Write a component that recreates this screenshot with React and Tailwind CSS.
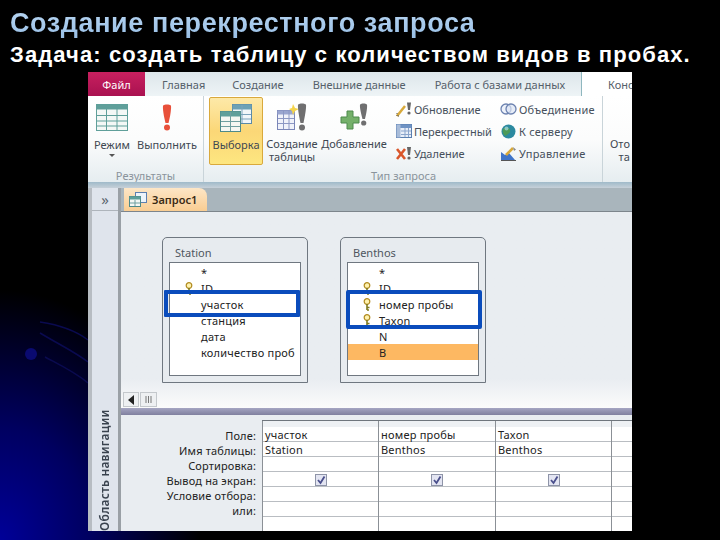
const ui = { fontFamily: '"Noto Sans", "Liberation Sans", sans-serif' };

function GridIcon({ w = 32, h = 27, head = "#5f9f9a", line = "#5f9f9a", fill = "#f4f8f6" }) {
  return (
    <svg width={w} height={h} viewBox="0 0 32 27" className="shrink-0">
      <rect x="0.5" y="0.5" width="31" height="26" fill={fill} stroke={line} />
      <rect x="0.5" y="0.5" width="31" height="5" fill={head} />
      <path d="M1 11.5H31M1 17H31M1 22H31M10.5 1V26M21 1V26" stroke={line} strokeWidth="1" fill="none" />
    </svg>
  );
}

function Bang({ color = "#e8503a", h = 27, w = 12 }) {
  return (
    <svg width={w} height={h} viewBox="0 0 12 27" className="shrink-0">
      <path d="M2 1.5C3.5 0 8.5 0 10 1.5C10.5 6 8.5 15 7.5 19H4.5C3.5 15 1.5 6 2 1.5Z" fill={color} />
      <circle cx="6" cy="23.5" r="3" fill={color} />
    </svg>
  );
}

function SelectIcon() {
  return (
    <svg width="32" height="28" viewBox="0 0 32 28" className="shrink-0">
      <rect x="12.5" y="0.5" width="19" height="19" fill="#f1f6fa" stroke="#5b8aa8" />
      <rect x="12.5" y="0.5" width="19" height="5" fill="#6ca1b5" />
      <path d="M13 10.5H31M13 15H31M22 1V19" stroke="#7ba3bd" fill="none" />
      <rect x="0.5" y="7.5" width="20" height="20" fill="#f5f7f2" stroke="#4e8a8a" />
      <rect x="0.5" y="7.5" width="20" height="5" fill="#5f9f9a" />
      <path d="M1 17.5H20M1 22.5H20M10.5 8V27" stroke="#6f9fa0" fill="none" />
    </svg>
  );
}

function MakeTableIcon() {
  return (
    <svg width="30" height="28" viewBox="0 0 30 28" className="shrink-0">
      <rect x="0.5" y="7.5" width="17" height="19" fill="#f0f2fa" stroke="#7a86b8" />
      <rect x="0.5" y="7.5" width="17" height="4" fill="#9aa6d0" />
      <path d="M1 15.5H17M1 20.5H17M6.5 8V26M12 8V26" stroke="#8c98c4" fill="none" />
      <path d="M16 1L18 5L22 6L18 8L16 12L15 8L12 6L15 5Z" fill="#f5d44a" />
      <path d="M21 1.5C23 0 27 0 29 1.5C29.5 6 27.5 15 26.5 20H23.5C22.5 15 20.5 6 21 1.5Z" fill="#6f6f70" />
      <circle cx="25" cy="24.5" r="3" fill="#6f6f70" />
    </svg>
  );
}

function AddIcon() {
  return (
    <svg width="29" height="28" viewBox="0 0 29 28" className="shrink-0">
      <path d="M7 8H13V14H19V20H13V26H7V20H1V14H7Z" fill="#74b06a" stroke="#4d8a4d" />
      <path d="M20 1.5C21.5 0 25.5 0 27 1.5C27.5 5 26 12 25 16H22.5C21.5 12 19.5 5 20 1.5Z" fill="#6f6f70" />
      <circle cx="23.7" cy="20" r="2.6" fill="#6f6f70" />
    </svg>
  );
}

function Key() {
  return (
    <svg width="8" height="13" viewBox="0 0 8 13" className="shrink-0">
      <circle cx="4" cy="3.5" r="2.8" fill="#fff3b0" stroke="#b08a1e" strokeWidth="1.2" />
      <path d="M4 6V12M4 9.5H6.5M4 12H6" stroke="#7f7a1e" strokeWidth="1.6" fill="none" />
    </svg>
  );
}

const SmallIcons = {
  update: (
    <svg width="16" height="16" viewBox="0 0 16 16">
      <path d="M1 15L9 5" stroke="#d8a93a" strokeWidth="2.5" />
      <path d="M1 12V15H4" stroke="#555" strokeDasharray="1 1" fill="none" />
      <path d="M11 1.5H15L14 9H12Z" fill="#666" />
      <circle cx="13" cy="12" r="1.6" fill="#666" />
    </svg>
  ),
  cross: (
    <svg width="16" height="14" viewBox="0 0 16 14">
      <rect x="0.5" y="0.5" width="15" height="13" fill="#e8eef8" stroke="#5b7fb0" />
      <rect x="0.5" y="0.5" width="15" height="3.5" fill="#6f93c4" />
      <rect x="0.5" y="0.5" width="4" height="13" fill="#a8bcd9" />
      <path d="M5 7H15M5 10.5H15M9 4V13M12.500 4V13" stroke="#8ba5cc" fill="none" />
    </svg>
  ),
  remove: (
    <svg width="16" height="15" viewBox="0 0 16 15">
      <path d="M1 3L9 13M9 3L1 13" stroke="#d9562a" strokeWidth="2.6" />
      <path d="M11 1H15L14 9H12Z" fill="#666" />
      <circle cx="13" cy="12" r="1.6" fill="#666" />
    </svg>
  ),
  join: (
    <svg width="17" height="12" viewBox="0 0 17 12">
      <circle cx="6" cy="6" r="5" fill="#eef2fa" stroke="#6c82b0" strokeWidth="1.3" />
      <circle cx="11" cy="6" r="5" fill="#dbe4f4" fillOpacity="0.7" stroke="#6c82b0" strokeWidth="1.3" />
    </svg>
  ),
  globe: (
    <svg width="15" height="15" viewBox="0 0 15 15">
      <circle cx="7.500" cy="7.500" r="7" fill="#2c8aa0" />
      <path d="M2 5C5 2 8 3 9 6C10 9 6 11 4 12C2 10 1 7 2 5Z" fill="#4d9a58" />
      <circle cx="5.500" cy="4.500" r="2" fill="#a8dce8" fillOpacity="0.7" />
    </svg>
  ),
  manage: (
    <svg width="17" height="15" viewBox="0 0 17 15">
      <path d="M1 14V6L5 9L9 7L15 14Z" fill="#3f74c8" />
      <path d="M1 14.500H16" stroke="#555" />
      <path d="M6 9L13 2" stroke="#d8a93a" strokeWidth="2.6" />
      <path d="M13 1L16 3.500L14 5Z" fill="#888" />
    </svg>
  ),
};

function SmallCmd({ icon, label, box, track }) {
  return (
    <div className="flex h-[22px] items-center">
      <div className={`flex items-center justify-center ${box}`}>{icon}</div>
      <span className={`whitespace-nowrap text-[11px] leading-none text-[#46505c] ${track}`}>{label}</span>
    </div>
  );
}

function FieldTable({ name, fields }) {
  return (
    <div className="flex h-[146px] w-[146px] flex-col rounded-t-[5px] border border-[#6f7780] bg-[#e7ebef] px-[6px]">
      <div className="flex h-[24px] shrink-0 items-center pl-[6px] pt-[6px] text-[11px] text-[#4f5660]">{name}</div>
      <div className="h-[114px] border border-[#6f7780] bg-white pt-[1px]">
        {fields.map((f) => (
          <div
            key={f.label}
            className={`flex h-[16px] items-center text-[11px] leading-none tracking-[0.22px] text-[#222] ${f.selected ? "bg-[#fdb862] text-[#8a3a10]" : ""}`}
          >
            <div className="flex w-[31px] shrink-0 justify-end pr-[8px]">{f.key && <Key />}</div>
            <span>{f.label}</span>
          </div>
        ))}
      </div>
    </div>
  );
}

const COLS = [
  { field: "участок", table: "Station", w: "w-[116px]" },
  { field: "номер пробы", table: "Benthos", w: "w-[117px]" },
  { field: "Taxon", table: "Benthos", w: "w-[116px]" },
];

function GridColumn({ field, table, w }) {
  const cell = "flex h-[15px] items-center border-b border-[#b9bdc2] px-[2px] pt-[1px] text-[11px] leading-none tracking-[0.22px] text-[#222]";
  return (
    <div className={`shrink-0 border-l border-[#8b9096] bg-white ${w}`}>
      <div className="h-[6px] bg-[#eef1f4]" />
      <div className={cell}>{field}</div>
      <div className={cell}>{table}</div>
      <div className={cell} />
      <div className={cell + " justify-center"}>
        <div className="flex h-[12px] w-[12px] items-center justify-center border border-[#8e94a8] bg-[#e3e5f2]">
          <svg width="10" height="10" viewBox="0 0 10 10">
            <path d="M2 5L4.500 8L8.500 1.500" stroke="#4a4f8c" strokeWidth="1.8" fill="none" />
          </svg>
        </div>
      </div>
      <div className={cell} />
      <div className={cell} />
    </div>
  );
}

export default function App() {
  return (
    <div
      className="relative h-[540px] w-[720px] overflow-hidden bg-[radial-gradient(ellipse_200px_250px_at_0%_100%,#000098_0%,#000060_45%,#000000_100%)]"
      style={{ fontFamily: '"Liberation Sans", sans-serif' }}
    >
      <svg className="absolute left-0 top-0" width="720" height="540" viewBox="0 0 720 540">
        <circle cx="31" cy="354" r="6" fill="#0a0a70" />
        <path d="M40 322C60 325 75 330 88 340M40 333C60 345 75 352 88 362M45 357C60 365 75 372 88 383" stroke="#0a0a50" strokeWidth="1.5" fill="none" />
      </svg>

      <div className="relative flex h-full flex-col">
        <h1 className="ml-[10px] mt-[8px] h-[31px] bg-gradient-to-b from-[#b9d6f2] to-[#98bfe6] bg-clip-text text-[27px] font-bold leading-[31px] tracking-[0.6px] text-transparent">
          Создание перекрестного запроса
        </h1>
        <h2 className="ml-[10px] mt-[2px] h-[27px] whitespace-nowrap text-[22px] font-bold leading-[27px] tracking-[1.1px] text-white">
          Задача: создать таблицу с количеством видов в пробах.
        </h2>

        <div className="ml-[88px] mt-[4px] flex h-[459px] w-[544px] flex-col overflow-hidden" style={ui}>
          {/* tab strip */}
          <div className="flex h-[24px] shrink-0 items-center whitespace-nowrap bg-gradient-to-b from-[#dde6ea] to-[#eef4f6] text-[11px] leading-none text-[#55606a]">
            <div className="flex h-full w-[57px] shrink-0 items-center justify-center bg-gradient-to-b from-[#c8205f] to-[#a91150] text-white">Файл</div>
            <span className="ml-[17px]">Главная</span>
            <span className="ml-[27px]">Создание</span>
            <span className="ml-[29px]">Внешние данные</span>
            <span className="ml-[29px]">Работа с базами данных</span>
            <div className="ml-[16px] flex h-full flex-1 items-center border-l border-[#8fb7bf] bg-white pl-[26px]">
              <span>Конс</span>
            </div>
          </div>

          {/* ribbon */}
          <div className="flex h-[86px] shrink-0 bg-gradient-to-b from-[#ffffff] via-[#fbfcfc] to-[#e6edf0] text-[#3f4852]">
            <div className="flex w-[116px] shrink-0 flex-col border-r border-[#c9d4d9]">
              <div className="flex h-[75px] pl-[1px] pt-[8px]">
                <div className="flex w-[46px] flex-col items-center">
                  <GridIcon />
                  <span className="mt-[7px] text-[11px] leading-[13px]">Режим</span>
                  <span className="mt-[3px] h-0 w-0 border-x-[3px] border-t-[3px] border-x-transparent border-t-[#555]" />
                </div>
                <div className="flex w-[64px] flex-col items-center">
                  <Bang />
                  <span className="mt-[7px] text-[11px] leading-[13px]">Выполнить</span>
                </div>
              </div>
              <div className="text-center text-[11px] leading-[13px] text-[#8a949c]">Результаты</div>
            </div>

            <div className="flex w-[399px] shrink-0 flex-col border-r border-[#c9d4d9]">
              <div className="flex h-[75px] pt-[1px]">
                <div className="ml-[5px] flex h-[68px] w-[54px] flex-col items-center rounded-[2px] border border-[#d9a93c] bg-gradient-to-b from-[#fde9a8] via-[#fbd777] to-[#fde680] pt-[6px]">
                  <SelectIcon />
                  <span className="mt-[6px] text-[11px] leading-[13px]">Выборка</span>
                </div>
                <div className="flex w-[58px] flex-col items-center pt-[6px] text-center">
                  <MakeTableIcon />
                  <span className="mt-[6px] text-[11px] leading-[13px]">Создание таблицы</span>
                </div>
                <div className="flex w-[66px] flex-col items-center pt-[6px]">
                  <AddIcon />
                  <span className="mt-[6px] text-[11px] leading-[13px]">Добавление</span>
                </div>
                <div className="ml-[8px] w-[104px] pt-[1px]">
                  <SmallCmd box="w-[19px] pr-[2px]" track="" icon={SmallIcons.update} label="Обновление" />
                  <SmallCmd box="w-[19px] pr-[2px]" track="" icon={SmallIcons.cross} label="Перекрестный" />
                  <SmallCmd box="w-[19px] pr-[2px]" track="" icon={SmallIcons.remove} label="Удаление" />
                </div>
                <div className="pt-[1px]">
                  <SmallCmd box="w-[20px] pr-[1px]" track="tracking-[0.2px]" icon={SmallIcons.join} label="Объединение" />
                  <SmallCmd box="w-[20px] pr-[1px]" track="tracking-[0.2px]" icon={SmallIcons.globe} label="К серверу" />
                  <SmallCmd box="w-[20px] pr-[1px]" track="tracking-[0.2px]" icon={SmallIcons.manage} label="Управление" />
                </div>
              </div>
              <div className="pl-[167px] text-[11px] leading-[13px] text-[#8a949c]">Тип запроса</div>
            </div>

            <div className="whitespace-nowrap pl-[7px] pt-[41px] text-[11px] leading-[13px]">
              Ото
              <br />
              {"\u00a0\u00a0\u00a0"}та
            </div>
          </div>

          {/* separator band */}
          <div className="h-[6px] shrink-0 bg-gradient-to-b from-[#9fbac9] to-[#c6d0d8]" />

          {/* work area */}
          <div className="flex min-h-0 flex-1">
            <div className="flex w-[33px] shrink-0 flex-col border-l-[4px] border-r-[3px] border-l-[#b7bcc2] border-r-[#9aa0a6] bg-[#dfe4ec]">
              <div className="flex h-[23px] shrink-0 items-center justify-center border-b border-[#aeb4bb] text-[15px] leading-none text-[#5d6670]">»</div>
              <div className="flex flex-1 items-start justify-center overflow-hidden">
                <span className="h-full rotate-180 whitespace-nowrap text-left text-[12px] font-semibold leading-none tracking-[0.2px] text-[#39424e] [writing-mode:vertical-rl]">
                  Область навигации
                </span>
              </div>
            </div>

            <div className="flex min-w-0 flex-1 flex-col">
              {/* doc tabs */}
              <div className="flex h-[23px] shrink-0 items-end bg-[#a9b5bc] pl-[3px]">
                <div className="flex h-[23px] w-[83px] items-center gap-[5px] rounded-tr-[8px] bg-gradient-to-b from-[#fde6c6] to-[#f9cd92] pl-[5px] text-[11px] font-semibold leading-none text-[#3a2a14]">
                  <svg width="18" height="15" viewBox="0 0 18 15">
                    <rect x="6.500" y="0.500" width="11" height="10" fill="#eef4fb" stroke="#5d7fb0" />
                    <rect x="0.500" y="4.500" width="11" height="10" fill="#f4f8f4" stroke="#4e8a8a" />
                    <rect x="0.500" y="4.500" width="11" height="3" fill="#5f9f9a" />
                    <path d="M6 8V14M1 11H11" stroke="#6f9fa0" />
                  </svg>
                  Запрос1
                </div>
              </div>

              {/* designer canvas */}
              <div className="relative h-[197px] shrink-0 border-t border-[#7d858c] bg-gradient-to-b from-[#e9edf1] from-[85%] to-[#fbfbfb]">
                <div className="flex gap-[32px] pl-[41px] pt-[25px]">
                  <FieldTable
                    name="Station"
                    fields={[
                      { label: "*" },
                      { label: "ID", key: true },
                      { label: "участок" },
                      { label: "станция" },
                      { label: "дата" },
                      { label: "количество проб" },
                    ]}
                  />
                  <FieldTable
                    name="Benthos"
                    fields={[
                      { label: "*" },
                      { label: "ID", key: true },
                      { label: "номер пробы", key: true },
                      { label: "Taxon", key: true },
                      { label: "N" },
                      { label: "B", selected: true },
                    ]}
                  />
                </div>
                {/* hand-drawn highlights over the field lists */}
                <div className="absolute left-[43px] top-[78px] h-[27px] w-[136px] rounded-[1px] border-[4px] border-[#0a4cbc]" />
                <div className="absolute left-[225px] top-[78px] h-[39px] w-[136px] rounded-[2px] border-[4px] border-[#0a4cbc]" />
                {/* scrollbar */}
                <div className="absolute bottom-[1px] left-[2px] flex h-[15px] items-center gap-[1px]">
                  <div className="flex h-[15px] w-[16px] items-center justify-center border border-[#c4c8cc] bg-[#eef0f2]">
                    <span className="h-0 w-0 border-y-[5px] border-r-[6px] border-y-transparent border-r-[#222]" />
                  </div>
                  <div className="flex h-[15px] w-[17px] items-center justify-center border border-[#c4c8cc] bg-[#eef0f2]">
                    <svg width="7" height="7" viewBox="0 0 7 7"><path d="M1 0V7M3.500 0V7M6 0V7" stroke="#777" /></svg>
                  </div>
                </div>
              </div>

              {/* splitter */}
              <div className="h-[7px] shrink-0 bg-gradient-to-b from-[#a5a5c2] to-[#80809f]" />

              {/* QBE grid */}
              <div className="flex min-h-0 flex-1 bg-[#e9edf1] pt-[5px]">
                <div className="w-[141px] shrink-0 pr-[6px] pt-[8px] text-right text-[11px] leading-[15px] tracking-[0.15px] text-[#222]">
                  <div>Поле:</div>
                  <div>Имя таблицы:</div>
                  <div>Сортировка:</div>
                  <div>Вывод на экран:</div>
                  <div>Условие отбора:</div>
                  <div>или:</div>
                </div>
                <div className="flex min-w-0 flex-1 border-t border-[#6f767d] bg-white">
                  {COLS.map((c) => (
                    <GridColumn key={c.field} {...c} />
                  ))}
                  <div className="flex-1 border-l border-[#8b9096]">
                    <div className="h-[6px] bg-[#eef1f4]" />
                    {[0, 1, 2, 3, 4, 5].map((i) => (
                      <div key={i} className="h-[15px] border-b border-[#b9bdc2]" />
                    ))}
                  </div>
                </div>
              </div>
            </div>
          </div>
        </div>
      </div>
    </div>
  );
}
